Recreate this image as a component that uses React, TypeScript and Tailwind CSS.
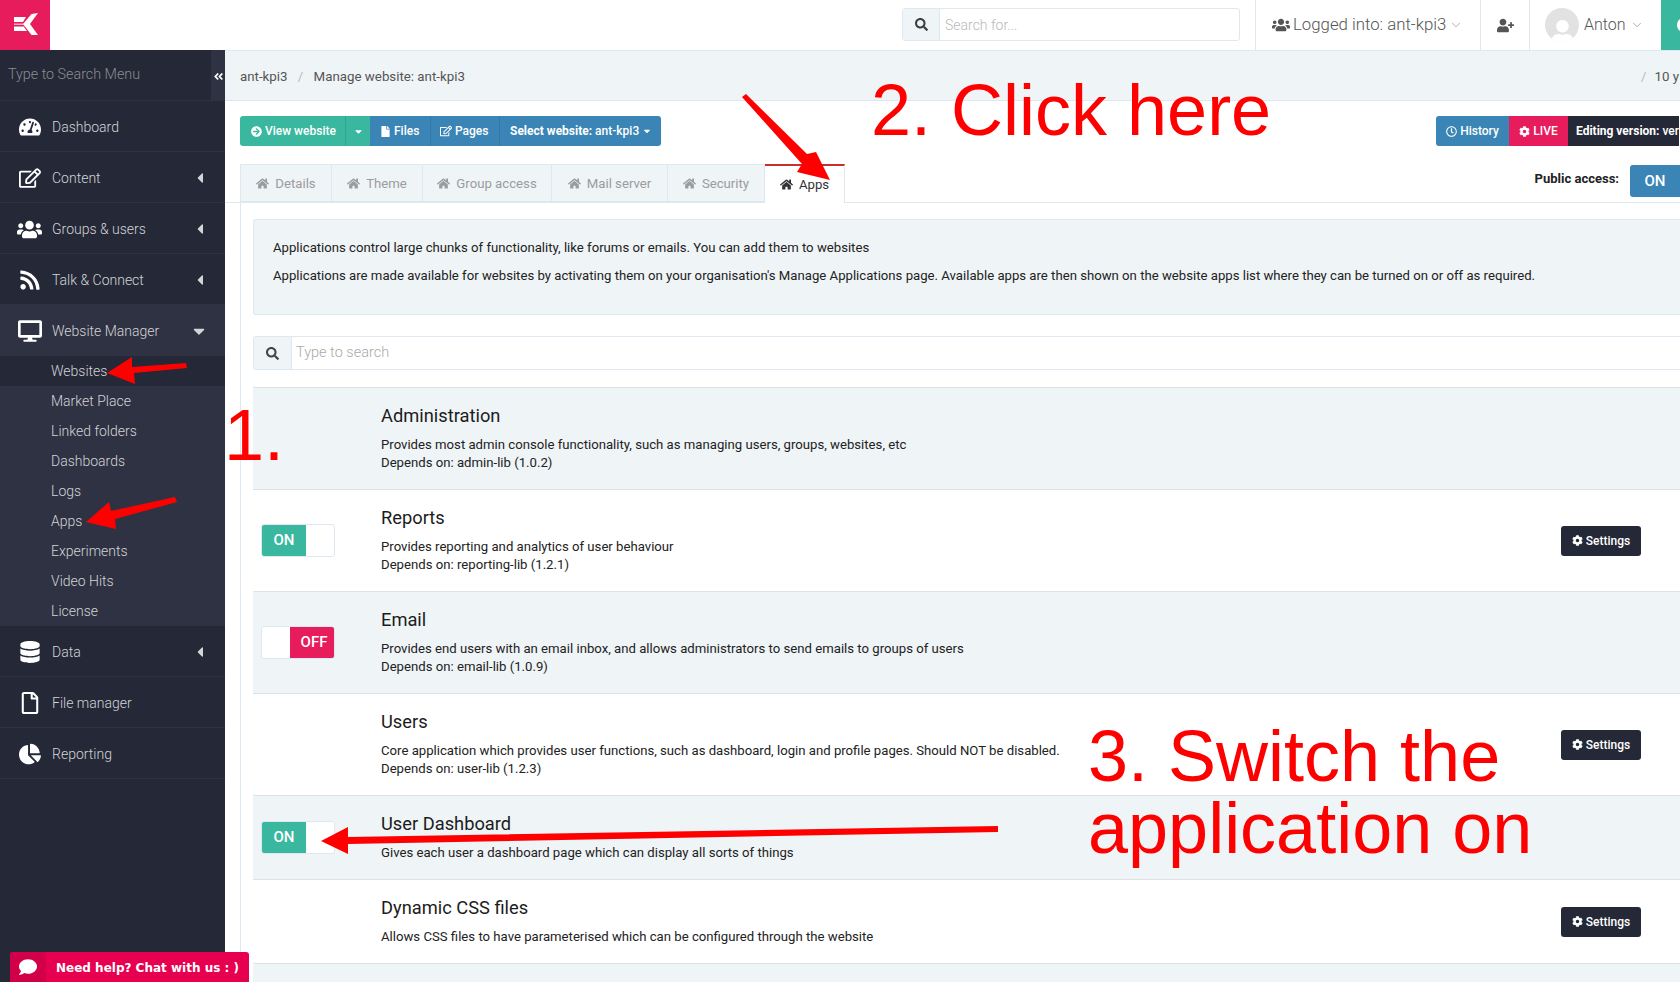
import type { ReactNode } from "react";
import { ChevronDown } from "lucide-react";
import {
  FaAngleDoubleLeft,
  FaArrowCircleRight,
  FaCaretDown,
  FaCaretLeft,
  FaChartPie,
  FaCog,
  FaComment,
  FaDatabase,
  FaDesktop,
  FaFile,
  FaHome,
  FaRegClock,
  FaRegEdit,
  FaRegFile,
  FaRss,
  FaSearch,
  FaTachometerAlt,
  FaUser,
  FaUserPlus,
  FaUsers,
} from "react-icons/fa";

const subItems = [
  "Websites",
  "Market Place",
  "Linked folders",
  "Dashboards",
  "Logs",
  "Apps",
  "Experiments",
  "Video Hits",
  "License",
];

const tabs = [
  { label: "Details", width: "w-[92px]" },
  { label: "Theme", width: "w-[91px]" },
  { label: "Group access", width: "w-[129px]" },
  { label: "Mail server", width: "w-[116px]" },
  { label: "Security", width: "w-[97px]" },
];

const apps = [
  {
    name: "Administration",
    text: "Provides most admin console functionality, such as managing users, groups, websites, etc",
    dep: "Depends on: admin-lib (1.0.2)",
    toggle: null,
    settings: false,
    height: "h-[102px]",
    shaded: true,
  },
  {
    name: "Reports",
    text: "Provides reporting and analytics of user behaviour",
    dep: "Depends on: reporting-lib (1.2.1)",
    toggle: "on",
    settings: true,
    height: "h-[102px]",
    shaded: false,
  },
  {
    name: "Email",
    text: "Provides end users with an email inbox, and allows administrators to send emails to groups of users",
    dep: "Depends on: email-lib (1.0.9)",
    toggle: "off",
    settings: false,
    height: "h-[102px]",
    shaded: true,
  },
  {
    name: "Users",
    text: "Core application which provides user functions, such as dashboard, login and profile pages. Should NOT be disabled.",
    dep: "Depends on: user-lib (1.2.3)",
    toggle: null,
    settings: true,
    height: "h-[102px]",
    shaded: false,
  },
  {
    name: "User Dashboard",
    text: "Gives each user a dashboard page which can display all sorts of things",
    dep: null,
    toggle: "on",
    settings: false,
    height: "h-[84px]",
    shaded: true,
  },
  {
    name: "Dynamic CSS files",
    text: "Allows CSS files to have parameterised which can be configured through the website",
    dep: null,
    toggle: null,
    settings: true,
    height: "h-[84px]",
    shaded: false,
  },
];

function NavRow({ icon, label, caret }: { icon: ReactNode; label: string; caret?: boolean }) {
  return (
    <div className="flex h-[51px] items-center border-b border-[#2f3242] pt-[2px] pr-[17px]">
      <div className="flex w-[52px] justify-center pl-[7px] text-[22px] text-white">{icon}</div>
      <span className="flex-1 text-[14px] font-light text-[#d3d4d8]">{label}</span>
      {caret && <FaCaretLeft className="text-[16px] text-[#d3d4d8]" />}
    </div>
  );
}

function Sidebar() {
  return (
    <aside className="w-[225px] shrink-0 bg-[#252837]">
      <div className="flex h-[51px] border-b border-[#2f3242]">
        <div className="flex-1 pl-[8px] pt-[14px] text-[14.300px] font-light text-[#8b8c90]">
          Type to Search Menu
        </div>
        <div className="flex w-[14px] items-center justify-center bg-[#2f3242] pt-[2px] text-[11px] text-white">
          <FaAngleDoubleLeft />
        </div>
      </div>
      <NavRow icon={<FaTachometerAlt />} label="Dashboard" />
      <NavRow icon={<FaRegEdit />} label="Content" caret />
      <NavRow icon={<FaUsers className="text-[25px]" />} label="Groups & users" caret />
      <NavRow icon={<FaRss />} label="Talk & Connect" caret />
      <div className="bg-[#2f3242]">
        <div className="flex h-[51px] items-center pt-[1px] pr-[17px]">
          <div className="flex w-[52px] justify-center pl-[7px] text-[24px] text-white">
            <FaDesktop />
          </div>
          <span className="flex-1 text-[14px] font-light text-[#d3d4d8]">Website Manager</span>
          <FaCaretDown className="text-[18px] text-[#d3d4d8]" />
        </div>
        {subItems.map((item, i) => (
          <div
            key={item}
            className={`flex h-[30px] items-center pl-[51px] text-[14px] font-light text-[#d3d4d8] ${
              i === 0 ? "bg-[#252837]" : ""
            }`}
          >
            {item}
          </div>
        ))}
      </div>
      <NavRow icon={<FaDatabase />} label="Data" caret />
      <NavRow icon={<FaRegFile />} label="File manager" />
      <NavRow icon={<FaChartPie />} label="Reporting" />
    </aside>
  );
}

function TopBar() {
  return (
    <header className="flex h-[50px] items-stretch bg-white">
      <div className="flex w-[50px] items-center justify-center bg-[#e61c5d]">
        <svg className="mb-[2px] ml-[2px]" width="24" height="22" viewBox="0 0 24 22" fill="#fff">
          <path d="M0 4h12l-3 5H0zM0 18h13l-3-4H0z" />
          <path d="M0 10.500h9.500l1 1.500H0zM0 13h10.500v.800H0z" opacity="0.65" />
          <path d="M24 0l-6.500 1L9 11l8.500 11H24l-8-11z" />
        </svg>
      </div>
      <div className="ml-[852px] mt-[8px] flex h-[33px] w-[338px] rounded-[3px] border border-[#dfe8f1]">
        <div className="flex w-[37px] items-center justify-center border-r border-[#dfe8f1] bg-[#eff4f7] text-[13px] text-[#3d3d3d]">
          <FaSearch />
        </div>
        <div className="flex-1 pl-[5px] pt-[6px] text-[14px] font-light text-[#b9b9b9]">Search for...</div>
      </div>
      <div className="ml-[15px] flex w-[226px] items-center border-x border-[#dfe8f1] pl-[16px] text-[#555]">
        <FaUsers className="mr-[3px] text-[18px]" />
        <span className="text-[16.800px] font-light">Logged into: ant-kpi3</span>
        <ChevronDown className="ml-[3px] text-[#777]" size={14} strokeWidth={1} />
      </div>
      <div className="flex w-[49px] items-center justify-center border-r border-[#dfe8f1] text-[17px] text-[#555]">
        <FaUserPlus />
      </div>
      <div className="flex w-[131px] items-center pl-[15px]">
        <div className="flex h-[34px] w-[34px] items-end justify-center overflow-hidden rounded-full bg-[#e2e2e2] text-[25px] text-white">
          <FaUser className="translate-y-[3px]" />
        </div>
        <span className="ml-[5px] text-[16px] font-light text-[#555]">Anton</span>
        <ChevronDown className="ml-[4px] text-[#777]" size={14} strokeWidth={1} />
      </div>
      <div className="flex flex-1 items-center justify-end overflow-hidden bg-[#3ab89f]">
        <div className="mr-[-10px] h-[14px] w-[13px] rounded-full bg-white" />
      </div>
    </header>
  );
}

function Toolbar() {
  return (
    <div className="flex h-[63px] items-start justify-between pt-[15px] pl-[15px]">
      <div className="flex h-[30px] overflow-hidden rounded-[3px] text-[12px] font-medium text-white">
        <div className="flex w-[105px] items-center gap-[3px] bg-[#3ab89f] pl-[11px]">
          <FaArrowCircleRight className="text-[11px]" />
          View website
        </div>
        <div className="flex w-[25px] items-center justify-center border-l border-[#32a48d] bg-[#3ab89f] text-[11px]">
          <FaCaretDown />
        </div>
        <div className="flex w-[60px] items-center gap-[3px] bg-[#3a85b5] pl-[10px]">
          <FaFile className="text-[11px]" />
          Files
        </div>
        <div className="flex w-[69px] items-center gap-[3px] border-l border-[#3378a4] bg-[#3a85b5] pl-[9px]">
          <FaRegEdit className="text-[12px]" />
          Pages
        </div>
        <div className="flex w-[162px] items-center gap-[3px] border-l border-[#3378a4] bg-[#3a85b5] pl-[10px]">
          <span>
            <span className="font-bold">Select website:</span> ant-kpi3
          </span>
          <FaCaretDown className="text-[10px]" />
        </div>
      </div>
      <div className="flex h-[30px] w-[244px] overflow-hidden rounded-l-[3px] text-[12px] font-medium text-white">
        <div className="flex w-[73px] shrink-0 items-center justify-center gap-[3px] bg-[#3a85b5]">
          <FaRegClock className="text-[11px]" />
          History
        </div>
        <div className="flex w-[59px] shrink-0 items-center justify-center gap-[3px] bg-[#e61c5d]">
          <FaCog className="text-[11px]" />
          LIVE
        </div>
        <div className="flex shrink-0 items-center whitespace-nowrap bg-[#252837] pl-[8px]">
          <span className="font-bold">Editing version:</span>&nbsp;ver
        </div>
      </div>
    </div>
  );
}

function Tabs() {
  return (
    <div className="flex h-[39px] items-stretch border-b border-[#dfe8f1] pl-[15px]">
      {tabs.map((tab) => (
        <div
          key={tab.label}
          className={`flex ${tab.width} items-center justify-center gap-[6px] border-y border-r border-[#dfe8f1] bg-[#eff4f7] pt-[1px] text-[13.200px] text-[#9a9c9e] first:border-l`}
        >
          <FaHome className="text-[13px]" />
          {tab.label}
        </div>
      ))}
      <div className="mb-[-1px] flex w-[80px] items-center justify-center gap-[6px] border-t-2 border-r border-t-[#c9302c] border-r-[#dfe8f1] bg-white text-[13.200px] text-[#333]">
        <FaHome className="text-[13px]" />
        Apps
      </div>
      <div className="ml-auto flex items-start">
        <span className="mt-[5px] mr-[11px] text-[13px] font-bold text-[#222]">Public access:</span>
        <div className="mt-[1px] flex h-[32px] w-[50px] items-center justify-center rounded-l-[3px] bg-[#3a85b5] text-[15px] font-medium text-white">
          ON
        </div>
      </div>
    </div>
  );
}

function Toggle({ state }: { state: string }) {
  if (state === "on") {
    return (
      <div className="flex h-[33px] w-[74px] overflow-hidden rounded-[3px] border border-[#dfe8f1] bg-white">
        <div className="flex w-[44px] items-center justify-center bg-[#3ab89f] text-[15px] font-medium text-white">
          ON
        </div>
      </div>
    );
  }
  return (
    <div className="flex h-[33px] w-[74px] justify-end overflow-hidden rounded-[3px] border border-[#dfe8f1] bg-white">
      <div className="flex w-[44px] items-center justify-center bg-[#e61c5d] pl-[4px] text-[15px] font-medium text-white">
        OFF
      </div>
    </div>
  );
}

function AppRow({ app }: { app: (typeof apps)[number] }) {
  return (
    <div
      className={`flex ${app.height} items-center border-b border-[#dfe2e5] ${
        app.shaded ? "bg-[#eff4f7]" : "bg-white"
      }`}
    >
      <div className="w-[128px] shrink-0 pl-[8px]">{app.toggle && <Toggle state={app.toggle} />}</div>
      <div className="flex-1 pb-[2px] text-[13.160px] leading-[18px] text-[#222]">
        <div className="mb-[8px] text-[18.300px] leading-[24px] text-[#1c1c1c]">{app.name}</div>
        <div>{app.text}</div>
        {app.dep && <div>{app.dep}</div>}
      </div>
      {app.settings && (
        <div className="mr-[39px] flex h-[30px] w-[80px] items-center justify-center gap-[3px] rounded-[3px] bg-[#252837] text-[12px] font-medium text-white">
          <FaCog className="text-[11px]" />
          Settings
        </div>
      )}
    </div>
  );
}

function Annotations() {
  return (
    <div className="font-['Liberation_Sans',sans-serif] text-[#ff0000]">
      <svg className="absolute inset-0" width="1680" height="982" viewBox="0 0 1680 982" fill="#ff0000">
        <path d="M186 363l1 5-53 5 1 11-28-11 25-16v10z" />
        <path d="M175 497l2 5-62 17 1 10-30-7 23-20 2 9z" />
        <path d="M742 97l4-3 61 60 9-2 14 28-33-8 5-8-60-67z" />
        <path d="M998 826v6l-650 12v10l-27-13 27-14v10z" />
      </svg>
      <div className="absolute left-[224px] top-[393px] text-[72px] leading-[84px]">1.</div>
      <div className="absolute left-[871px] top-[68px] whitespace-nowrap text-[72px] leading-[84px]">
        2. Click here
      </div>
      <div className="absolute left-[1088px] top-[720px] whitespace-nowrap text-[72px] leading-[72px]">
        3. Switch the
        <br />
        application on
      </div>
    </div>
  );
}

export default function App() {
  return (
    <div className="relative h-[982px] w-[1680px] overflow-hidden bg-white font-['Roboto',sans-serif]">
      <TopBar />
      <div className="flex h-[932px]">
        <Sidebar />
        <main className="min-w-0 flex-1">
          <div className="flex h-[51px] items-center justify-between border-y border-[#dfe8f1] bg-[#eff4f7] pt-[2px] pl-[15px] text-[13.300px] text-[#555]">
            <div>
              ant-kpi3 <span className="mx-[7px] text-[#bbb]">/</span> Manage website: ant-kpi3
            </div>
            <div className="w-[39px] overflow-hidden whitespace-nowrap">
              <span className="mr-[8px] text-[#bbb]">/</span>10 y
            </div>
          </div>
          <Toolbar />
          <Tabs />
          <div className="ml-[15px] h-[800px] border-l border-[#dfe8f1] pl-[12px] pt-[16px]">
            <div className="h-[96px] rounded-l-[3px] border border-r-0 border-[#dfe8f1] bg-[#eff4f7] pl-[19px] pt-[19px] text-[13.160px] leading-[18px] text-[#222]">
              <p>Applications control large chunks of functionality, like forums or emails. You can add them to websites</p>
              <p className="mt-[10px]">
                Applications are made available for websites by activating them on your organisation's Manage
                Applications page. Available apps are then shown on the website apps list where they can be turned on or
                off as required.
              </p>
            </div>
            <div className="mt-[21px] flex h-[34px] rounded-l-[3px] border border-r-0 border-[#dfe8f1]">
              <div className="flex w-[38px] items-center justify-center border-r border-[#dfe8f1] bg-[#eff4f7] text-[13px] text-[#444]">
                <FaSearch />
              </div>
              <div className="flex flex-1 items-center pl-[4px] text-[14.500px] font-light text-[#aaa]">Type to search</div>
            </div>
            <div className="mt-[17px] border-t border-[#dfe2e5]">
              {apps.map((app) => (
                <AppRow key={app.name} app={app} />
              ))}
              <div className="h-[30px] bg-[#eff4f7]" />
            </div>
          </div>
        </main>
      </div>
      <Annotations />
      <div className="absolute bottom-0 left-[10px] flex h-[30px] w-[239px] overflow-hidden rounded-t-[3px] bg-[#e6004f] text-white">
        <div className="flex w-[36px] items-center justify-center bg-[#d10048] text-[18px]">
          <FaComment />
        </div>
        <div className="flex-1 pl-[10px] pt-[7px] font-['DejaVu_Sans',sans-serif] text-[12px] font-bold">
          Need help? Chat with us : )
        </div>
      </div>
    </div>
  );
}
